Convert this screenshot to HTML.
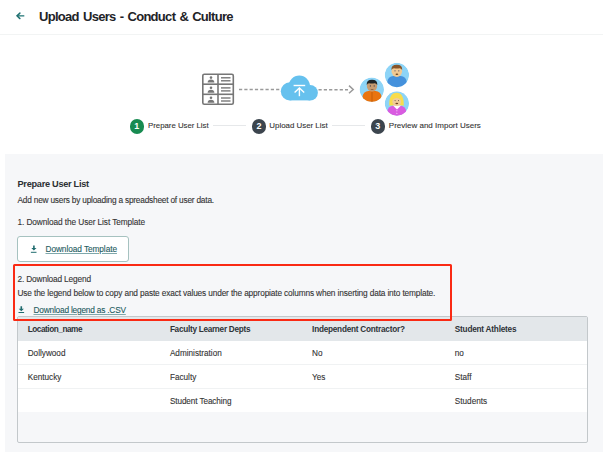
<!DOCTYPE html>
<html><head><meta charset="utf-8">
<style>
*{margin:0;padding:0;box-sizing:border-box}
html,body{width:603px;height:452px;overflow:hidden;background:#fff;font-family:"Liberation Sans",sans-serif;color:#333}
.a{position:absolute;white-space:nowrap;line-height:1;-webkit-text-stroke:0.1px currentColor}
#hdr{position:absolute;left:0;top:0;width:603px;height:35px;border-bottom:1px solid #f2f4f4}
#title{left:39px;top:9.7px;font-size:13px;font-weight:bold;color:#1e2327;letter-spacing:-0.7px;word-spacing:1.2px;-webkit-text-stroke:0}
#sec{position:absolute;left:5px;top:154px;width:598px;height:298px;background:#f6f7f9}
.step{color:#333}
.circ{position:absolute;-webkit-text-stroke:0;width:14.5px;height:14.5px;border-radius:50%;color:#fff;font-size:9px;font-weight:bold;text-align:center;line-height:14.5px}
.sline{position:absolute;height:1px;background:#e6e8ea;top:125px}
.t8{color:#333}
#btn{position:absolute;left:17px;top:236px;width:112px;height:26px;border:1px solid #a6c2c0;border-radius:3px;background:#fff}
.lnk{color:#1d5b60;text-decoration:underline;text-decoration-color:#7fa8ab;text-underline-offset:0.6px}
#red{position:absolute;z-index:5;left:13px;top:264px;width:439px;height:56.5px;border:2px solid #fa2a14;border-radius:1.5px}
#tbl{position:absolute;left:17px;top:316px;width:571px;height:127px;border:1px solid #c3c8cb;border-radius:2px;overflow:hidden;background:#f6f7f9}
#th{position:absolute;left:0;top:0;width:569px;height:24px;background:#e3e7ea}
.row{position:absolute;left:0;width:569px;height:23.7px;background:#fff;border-bottom:1px solid #f0f2f3}
.hc{font-weight:bold;color:#2e3338;-webkit-text-stroke:0!important}
.dc{color:#333}
</style></head><body>
<div id="hdr"></div>
<svg class="a" style="left:15px;top:11px" width="12" height="10" viewBox="0 0 12 10">
<path d="M2.3 4.85 H9.3" stroke="#2d7d7e" stroke-width="1.35" fill="none"/>
<path d="M4.9 2.1 L2 4.85 L4.9 7.6" stroke="#1f7070" stroke-width="1.45" fill="none" stroke-linecap="round"/>
</svg>
<div class="a" id="title">Upload Users - Conduct &amp; Culture</div>
<!-- illustration -->
<svg class="a" style="left:200px;top:60px" width="220" height="60" viewBox="200 60 220 60">
 <g fill="none" stroke="#767676" stroke-width="1.6">
  <rect x="202.8" y="74.3" width="30.5" height="30" rx="1.5"/>
  <line x1="218" y1="74" x2="218" y2="104.5"/>
  <line x1="203" y1="84.2" x2="233" y2="84.2"/>
  <line x1="203" y1="94.3" x2="233" y2="94.3"/>
 </g>
 <g fill="#767676">
  <circle cx="211" cy="77.6" r="1.3"/><path d="M207.6 82.6 Q207.8 79.6 211 79.6 Q214.2 79.6 214.4 82.6 Z"/>
  <circle cx="211" cy="87.7" r="1.3"/><path d="M207.6 92.7 Q207.8 89.7 211 89.7 Q214.2 89.7 214.4 92.7 Z"/>
  <circle cx="211" cy="97.8" r="1.3"/><path d="M207.6 102.8 Q207.8 99.8 211 99.8 Q214.2 99.8 214.4 102.8 Z"/>
 </g>
 <g stroke="#727272" stroke-width="1.35">
  <line x1="221" y1="77.8" x2="230.5" y2="77.8"/><line x1="221" y1="80.8" x2="230.5" y2="80.8"/>
  <line x1="221" y1="87.9" x2="230.5" y2="87.9"/><line x1="221" y1="90.9" x2="230.5" y2="90.9"/>
  <line x1="221" y1="98" x2="230.5" y2="98"/><line x1="221" y1="101" x2="230.5" y2="101"/>
 </g>
 <line x1="239" y1="89.6" x2="280" y2="89.6" stroke="#9a9a9a" stroke-width="1.5" stroke-dasharray="3.2 2.1"/>
 <line x1="318.5" y1="89.7" x2="348" y2="89.7" stroke="#9a9a9a" stroke-width="1.5" stroke-dasharray="3.2 2.1"/>
 <path d="M349 85.6 L353.2 89.5 L349 93.3" stroke="#9a9a9a" stroke-width="1.5" fill="none"/>
 <!-- cloud -->
 <g fill="#66c1ee">
  <circle cx="299.3" cy="86.3" r="10.7"/>
  <circle cx="289.85" cy="91.35" r="9.05"/>
  <circle cx="310.15" cy="92.65" r="7.75"/>
  <rect x="289.85" y="86" width="20.3" height="14.4"/>
 </g>
 <g stroke="#fff" stroke-width="1.4" fill="none">
  <line x1="293.6" y1="85.5" x2="305.2" y2="85.5"/>
  <line x1="299.4" y1="88.2" x2="299.4" y2="96.2"/>
  <path d="M294.6 92.6 L299.4 88 L304.2 92.6"/>
 </g>
</svg>

<!-- avatars -->
<svg class="a" style="left:355px;top:60px" width="60" height="60" viewBox="355 60 60 60">
 <defs>
  <clipPath id="ca"><circle cx="371.8" cy="89.6" r="12.2"/></clipPath>
  <clipPath id="cb"><circle cx="396.9" cy="75" r="12.15"/></clipPath>
  <clipPath id="cc"><circle cx="396.9" cy="103.5" r="12.15"/></clipPath>
 </defs>
 <g clip-path="url(#ca)">
  <circle cx="371.8" cy="89.6" r="12.2" fill="#8dd4f7"/>
  <rect x="362.5" y="90.9" width="19" height="14" rx="6" fill="#e9740f"/>
  <rect x="371.5" y="92" width="1" height="10" fill="#c55c08"/>
  <ellipse cx="372" cy="86" rx="5.2" ry="5.5" fill="#c69c72"/>
  <path d="M366.7 85 Q366.3 79.7 372 79.7 Q377.7 79.7 377.3 85 Q376 83 374.5 83.2 Q372 83.6 369 83.2 Q367.5 83.3 366.7 85Z" fill="#1f2527"/>
  <circle cx="370.4" cy="85.9" r="0.6" fill="#3a3a4a"/><circle cx="374.2" cy="85.9" r="0.6" fill="#3a3a4a"/>
  <rect x="370.8" y="89" width="2.6" height="0.8" fill="#7a5a40"/>
 </g>
 <g clip-path="url(#cb)">
  <circle cx="396.9" cy="75" r="12.15" fill="#8dd4f7"/>
  <rect x="387.3" y="75.9" width="19.4" height="14" rx="6" fill="#4591dc"/>
  <ellipse cx="396.8" cy="71.3" rx="5.3" ry="5.6" fill="#f2c992"/>
  <path d="M391.4 70 Q391 64.8 396.8 64.8 Q402.6 64.8 402.2 70 Q401 68.3 399.5 68.3 Q397 68.7 394 68.3 Q392.3 68.4 391.4 70Z" fill="#86552a"/>
  <circle cx="395" cy="70.8" r="0.6" fill="#4a4a6a"/><circle cx="398.8" cy="70.8" r="0.6" fill="#4a4a6a"/>
  <ellipse cx="396.9" cy="74.2" rx="1.4" ry="0.8" fill="#6e4420"/>
 </g>
 <g clip-path="url(#cc)">
  <circle cx="396.9" cy="103.5" r="12.15" fill="#8dd4f7"/>
  <path d="M389.2 105.4 Q389 92.8 396.6 92.8 Q404 92.8 403.8 105.4 Z" fill="#f8dc4c"/>
  <rect x="387.3" y="105.7" width="19" height="14" rx="6" fill="#d95be0"/>
  <path d="M393 105.6 L397 109.5 L401 105.6 Z" fill="#fff"/>
  <ellipse cx="396.7" cy="101.7" rx="4.4" ry="4.2" fill="#f0cc9a"/>
  <path d="M392.2 100 Q393 96.2 396.7 96.4 Q400.4 96.2 401.2 100 Q399 97.9 396.7 98 Q394.4 97.9 392.2 100Z" fill="#f8dc4c"/>
  <ellipse cx="396.8" cy="103.5" rx="1.4" ry="0.8" fill="#6e4420"/>
  <circle cx="395.1" cy="100.6" r="0.55" fill="#6a5a50"/><circle cx="398.5" cy="100.6" r="0.55" fill="#6a5a50"/>
  <circle cx="396.9" cy="110.8" r="0.5" fill="#fff"/><circle cx="396.9" cy="113.3" r="0.5" fill="#fff"/>
 </g>
</svg>

<!-- stepper -->
<div class="circ" style="left:129.5px;top:119.1px;background:#178b51">1</div>
<div class="a step" style="left:148px;top:121.5px;font-size:7.8px;">Prepare User List</div>
<div class="sline" style="left:213.3px;width:32.7px"></div>
<div class="circ" style="left:251.7px;top:119px;background:#3c454e">2</div>
<div class="a step" style="left:269.3px;top:122.4px;font-size:7.9px;">Upload User List</div>
<div class="sline" style="left:332.3px;width:32.5px"></div>
<div class="circ" style="left:370.6px;top:119px;background:#3c454e">3</div>
<div class="a step" style="left:388.8px;top:122.4px;font-size:8.0px;">Preview and Import Users</div>
<div id="sec"></div>
<div class="a" style="left:17.5px;top:179.6px;font-size:9.2px;font-weight:bold;color:#2b2f33;letter-spacing:-0.28px;-webkit-text-stroke:0">Prepare User List</div>
<div class="a t8" style="left:17.5px;top:195.6px;font-size:8.3px;letter-spacing:-0.207px">Add new users by uploading a spreadsheet of user data.</div>
<div class="a t8" style="left:17.5px;top:217.9px;font-size:8.3px;letter-spacing:-0.096px">1. Download the User List Template</div>
<div id="btn"></div>
<svg class="a" style="left:29.5px;top:244px" width="8" height="10" viewBox="0 0 8 10">
 <path d="M3.1 1.6 H4.7 V3.9 H6.5 L3.9 6.4 L1.3 3.9 H3.1 Z" fill="#1f6b6e"/>
 <rect x="0.9" y="7.8" width="5.6" height="1" fill="#1f6b6e"/>
</svg>
<div class="a lnk" style="left:45.5px;top:244.8px;font-size:8.3px;letter-spacing:-0.075px">Download Template</div>
<div id="red"></div>
<div class="a t8" style="left:17.5px;top:275.0px;font-size:8.3px;letter-spacing:-0.151px">2. Download Legend</div>
<div class="a t8" style="left:17.5px;top:288.6px;font-size:8.3px;letter-spacing:-0.146px">Use the legend below to copy and paste exact values under the appropiate columns when inserting data into template.</div>
<svg class="a" style="left:18px;top:305px" width="8" height="10" viewBox="0 0 8 10">
 <path d="M2.5 1.3 H4.1 V3.8 H5.9 L3.3 6.3 L0.7 3.8 H2.5 Z" fill="#1f6b6e"/>
 <rect x="0.5" y="7" width="5.6" height="1" fill="#1f6b6e"/>
</svg>
<div class="a lnk" style="left:33.5px;top:306.1px;font-size:8.3px;letter-spacing:-0.198px">Download legend as .CSV</div>
<div id="tbl">
 <div id="th"></div>
 <div class="row" style="top:24px;height:24px"></div>
 <div class="row" style="top:48px;height:24px"></div>
 <div class="row" style="top:72px;height:22.5px;border-bottom:none"></div>
</div>
<div class="a hc" style="left:27.7px;top:326.2px;font-size:8.2px;letter-spacing:-0.435px">Location_name</div>
<div class="a hc" style="left:169.9px;top:326.2px;font-size:8.2px;letter-spacing:-0.271px">Faculty Learner Depts</div>
<div class="a hc" style="left:312.1px;top:326.2px;font-size:8.2px;letter-spacing:-0.226px">Independent Contractor?</div>
<div class="a hc" style="left:454.8px;top:326.2px;font-size:8.2px;letter-spacing:-0.203px">Student Athletes</div>
<div class="a dc" style="left:27.7px;top:349.6px;font-size:8.2px;">Dollywood</div>
<div class="a dc" style="left:169.9px;top:349.6px;font-size:8.2px;">Administration</div>
<div class="a dc" style="left:312.1px;top:349.6px;font-size:8.2px;">No</div>
<div class="a dc" style="left:454.8px;top:349.6px;font-size:8.2px;">no</div>
<div class="a dc" style="left:27.7px;top:373.6px;font-size:8.2px;">Kentucky</div>
<div class="a dc" style="left:169.9px;top:373.6px;font-size:8.2px;">Faculty</div>
<div class="a dc" style="left:312.1px;top:373.6px;font-size:8.2px;">Yes</div>
<div class="a dc" style="left:454.8px;top:373.6px;font-size:8.2px;">Staff</div>
<div class="a dc" style="left:169.9px;top:397.6px;font-size:8.2px;letter-spacing:-0.1px">Student Teaching</div>
<div class="a dc" style="left:454.8px;top:397.6px;font-size:8.2px;">Students</div>
</body></html>
